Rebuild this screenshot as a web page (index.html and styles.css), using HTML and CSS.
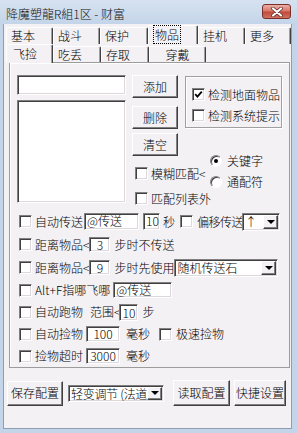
FILE: index.html
```html
<!DOCTYPE html>
<html lang="zh-CN">
<head>
    <meta charset="UTF-8">
    <title>降魔塑龍R組1区 - 财富</title>
    <link rel="stylesheet" href="styles.css">
</head>
<body>
    <div class="window">
        <div class="titlebar">
            <span class="title">降魔塑龍R組1区 - 财富</span>
            <div class="close">
                <svg width="14" height="10" viewBox="0 0 14 10">
                    <path d="M3 1.5L11 8.5M11 1.5L3 8.5" stroke="#5a2a25" stroke-width="3.6" stroke-linecap="round"/>
                    <path d="M3 1.5L11 8.5M11 1.5L3 8.5" stroke="#fff" stroke-width="2.2" stroke-linecap="round"/>
                </svg>
            </div>
        </div>
        <div class="client">
            <div class="tabs outer-tabs">
                <div class="tab">基本</div>
                <div class="tab">战斗</div>
                <div class="tab w48">保护</div>
                <div class="tab w50 active"><span class="focus">物品</span></div>
                <div class="tab">挂机</div>
                <div class="tab w46">更多</div>
            </div>
            <div class="tabs inner-tabs">
                <div class="tab active">飞捡</div>
                <div class="tab w48">吃丢</div>
                <div class="tab w48">存取</div>
                <div class="tab w57 center">穿戴</div>
            </div>
            <div class="page">
                <div class="top">
                    <div class="list-col">
                        <div class="field name-field"></div>
                        <div class="field listbox"></div>
                    </div>
                    <div class="btn-col">
                        <div class="btn">添加</div>
                        <div class="btn del">删除</div>
                        <div class="btn clr">清空</div>
                        <div class="check fuzzy"><span class="box"></span><span>模糊匹配&lt;</span></div>
                        <div class="check outside"><span class="box"></span><span>匹配列表外</span></div>
                    </div>
                    <div class="opt-col">
                        <div class="group">
                            <div class="check">
                                <span class="box">
                                    <svg width="9" height="9" viewBox="0 0 9 9"><polyline points="1.2,4.2 3.4,6.6 7.8,1.6" fill="none" stroke="#000" stroke-width="1.8"/></svg>
                                </span>
                                <span>检测地面物品</span>
                            </div>
                            <div class="check second"><span class="box"></span><span>检测系统提示</span></div>
                        </div>
                        <div class="radio first"><span class="dot on"></span><span>关键字</span></div>
                        <div class="radio"><span class="dot"></span><span>通配符</span></div>
                    </div>
                </div>

                <div class="row h23">
                    <div class="check"><span class="box"></span><span>自动传送</span></div>
                    <div class="field text-field" style="width:55px;margin-left:1px">@传送</div>
                    <div class="field text-field" style="width:17px;margin-left:4px">10</div>
                    <span class="ml3">秒</span>
                    <div class="check gap4 ml5"><span class="box"></span><span class="tight">偏移传送</span></div>
                    <div class="select small-select">
                        <span class="select-text">↑</span>
                        <span class="arrow"><i></i></span>
                    </div>
                </div>
                <div class="row h23">
                    <div class="check"><span class="box"></span><span>距离物品&lt;</span></div>
                    <div class="field num-field step-field">3</div>
                    <span class="ml4">步时不传送</span>
                </div>
                <div class="row h23">
                    <div class="check"><span class="box"></span><span>距离物品&lt;</span></div>
                    <div class="field num-field step-field">9</div>
                    <span class="ml4">步时先使用</span>
                    <div class="select stone-select">
                        <span class="select-text">随机传送石</span>
                        <span class="arrow"><i></i></span>
                    </div>
                </div>
                <div class="row">
                    <div class="check"><span class="box"></span><span>Alt+F指哪飞哪</span></div>
                    <div class="field text-field" style="width:59px;height:16px;margin-left:3px">@传送</div>
                </div>
                <div class="row">
                    <div class="check"><span class="box"></span><span>自动跑物</span></div>
                    <span class="ml7">范围&lt;</span>
                    <div class="field num-field range-field">10</div>
                    <span class="ml4">步</span>
                </div>
                <div class="row">
                    <div class="check"><span class="box"></span><span>自动捡物</span></div>
                    <div class="field num-field ms-field">100</div>
                    <span class="ml6">毫秒</span>
                    <div class="check gap4 ml9"><span class="box"></span><span>极速捡物</span></div>
                </div>
                <div class="row">
                    <div class="check"><span class="box"></span><span>捡物超时</span></div>
                    <div class="field num-field ms-field">3000</div>
                    <span class="ml6">毫秒</span>
                </div>
            </div>

            <div class="footer">
                <div class="btn save">保存配置</div>
                <div class="select mode-select">
                    <span class="select-text">轻变调节 (法道</span>
                    <span class="arrow"><i></i></span>
                </div>
                <div class="btn load">读取配置</div>
                <div class="btn hotkey">快捷设置</div>
            </div>
        </div>
    </div>
</body>
</html>
```

FILE: styles.css
```css
* {
    box-sizing: border-box;
}
body {
    margin: 0;
    font-family: "Noto Sans CJK SC", "Noto Sans", sans-serif;
    font-size: 12px;
    font-weight: 300;
    line-height: 14px;
    color: #000;
    background: #fff;
}
.window {
    width: 297px;
    height: 433px;
    display: flex;
    flex-direction: column;
    background: #c4d5e9;
}
.titlebar {
    height: 24px;
    display: flex;
    align-items: flex-start;
    background: linear-gradient(#d6e2f0, #c4d5e9);
}
.title {
    margin: 7px 0 0 6px;
    color: #111;
}
.close {
    margin: 4px 6px 0 auto;
    width: 29px;
    height: 15px;
    border: 1px solid #7a2f28;
    border-radius: 3px;
    background: linear-gradient(#eab0a6, #d7786a 45%, #c24b3c 55%, #d0715f);
    display: flex;
    align-items: center;
    justify-content: center;
}

.client {
    flex: 1;
    margin: 0 5px 4px 3px;
    background: #f4f1f4;
    border: 1px solid #8d9fb5;
    border-top: none;
}

/* tabs */
.tabs {
    display: flex;
    padding-left: 2px;
}
.outer-tabs {
    height: 20px;
    align-items: flex-end;
}
.inner-tabs {
    height: 18px;
    align-items: flex-end;
    position: relative;
    z-index: 1;
}
.tab {
    width: 47px;
    height: 17px;
    padding-left: 4px;
    line-height: 15px;
    border: 1px solid;
    border-color: #fff #404040 transparent #fff;
    border-bottom: none;
    border-radius: 2px 2px 0 0;
    box-shadow: inset -1px 0 #a0a0a0;
    white-space: nowrap;
}
.outer-tabs .tab.active {
    height: 19px;
    padding-left: 5px;
    padding-top: 1px;
}
.inner-tabs .tab {
    height: 16px;
}
.inner-tabs .tab.active {
    height: 19px;
    margin-bottom: -1px;
    padding-left: 6px;
    padding-top: 1px;
    background: #f4f1f4;
}
.tab.w46 { width: 46px; }
.tab.w48 { width: 48px; }
.tab.w50 { width: 50px; }
.tab.w57 { width: 57px; }
.tab.center {
    padding-left: 0;
    text-align: center;
}
.focus {
    outline: 1px dotted #000;
    outline-offset: 0;
    padding: 0 1px;
}

/* inner page */
.page {
    margin-left: 5px;
    width: 281px;
    height: 306px;
    border: 1px solid #9c9c9c;
    box-shadow: inset 1px 1px #fff;
}
.top {
    display: flex;
    height: 147px;
}
.list-col {
    margin-left: 7px;
    padding-top: 12px;
    width: 109px;
}
.name-field {
    height: 20px;
}
.listbox {
    margin-top: 5px;
    height: 103px;
}
.btn-col {
    margin-left: 6px;
    padding-top: 12px;
    width: 53px;
}
.btn-col .btn {
    width: 46px;
    height: 23px;
}
.btn-col .del { margin-top: 8px; }
.btn-col .clr { margin-top: 4px; }
.fuzzy {
    margin: 11px 0 0 3px;
}
.outside {
    margin: 12px 0 0 3px;
}
.opt-col {
    width: 97px;
    padding-top: 13px;
}
.group {
    height: 52px;
    padding: 11px 0 0 6px;
    border: 1px solid #a0a0a0;
    box-shadow: inset 1px 1px #fff, 1px 1px #fff;
}
.group .second {
    margin-top: 8px;
}
.radio {
    display: flex;
    align-items: center;
    gap: 5px;
    height: 12px;
    margin: 9px 0 0 25px;
    white-space: nowrap;
}
.radio.first {
    margin-top: 27px;
}
.dot {
    width: 12px;
    height: 12px;
    border-radius: 50%;
    border: 1px solid;
    border-color: #808080 #fff #fff #808080;
    box-shadow: inset 1px 1px #404040;
    background: #fff;
    display: flex;
    align-items: center;
    justify-content: center;
    flex: none;
}
.dot.on::after {
    content: "";
    width: 4px;
    height: 4px;
    border-radius: 50%;
    background: #000;
}

/* checkbox */
.check {
    display: flex;
    align-items: center;
    gap: 3px;
    height: 13px;
    white-space: nowrap;
    flex: none;
}
.check.gap4 { gap: 4px; }
.tight { letter-spacing: -0.5px; }
.box {
    width: 13px;
    height: 13px;
    flex: none;
    border: 1px solid;
    border-color: #808080 #fff #fff #808080;
    box-shadow: inset 1px 1px #404040, inset -1px -1px #dcd8dc;
    background: #fff;
    display: flex;
    align-items: center;
    justify-content: center;
}

/* rows */
.row {
    display: flex;
    align-items: center;
    height: 22px;
    padding-left: 9px;
    white-space: nowrap;
}
.row > * { flex: none; }
.row.h23 { height: 23px; }
.ml3 { margin-left: 3px; }
.ml4 { margin-left: 4px; }
.ml5 { margin-left: 5px; }
.ml6 { margin-left: 6px; }
.ml7 { margin-left: 7px; }
.ml9 { margin-left: 9px; }

/* sunken fields */
.field {
    background: #fff;
    border: 1px solid;
    border-color: #808080 #fff #fff #808080;
    box-shadow: inset 1px 1px #404040, inset -1px -1px #dcd8dc;
}
.text-field {
    height: 17px;
    padding-left: 2px;
    line-height: 14px;
}
.num-field {
    text-align: center;
    line-height: 13px;
}
.step-field {
    width: 21px;
    height: 15px;
    margin-left: 0;
}
.range-field {
    width: 19px;
    height: 17px;
    line-height: 15px;
    margin-left: -1px;
}
.ms-field {
    width: 34px;
    height: 16px;
    margin-left: 3px;
    line-height: 14px;
}

/* combo boxes */
.select {
    display: flex;
    align-items: center;
    height: 18px;
    padding: 0 1px 0 2px;
    background: #fff;
    border: 1px solid;
    border-color: #808080 #fff #fff #808080;
    box-shadow: inset 1px 1px #404040, inset -1px -1px #dcd8dc;
}
.select-text {
    flex: 1;
    line-height: 16px;
    white-space: nowrap;
}
.arrow {
    width: 15px;
    height: 14px;
    flex: none;
    background: #f4f1f4;
    border: 1px solid;
    border-color: #fff #404040 #404040 #fff;
    box-shadow: inset -1px -1px #808080;
    display: flex;
    align-items: center;
    justify-content: center;
}
.arrow i {
    width: 0;
    height: 0;
    border-left: 4px solid transparent;
    border-right: 4px solid transparent;
    border-top: 4px solid #000;
}
.small-select {
    width: 38px;
    margin-left: -1px;
}
.stone-select {
    width: 104px;
}
.mode-select {
    width: 96px;
    height: 17px;
    margin-left: 5px;
}
.mode-select .select-text {
    line-height: 15px;
    letter-spacing: -0.3px;
}
.mode-select .arrow {
    height: 13px;
}

/* raised buttons */
.btn {
    display: flex;
    align-items: center;
    justify-content: center;
    background: #f4f1f4;
    border: 1px solid;
    border-color: #fff #404040 #404040 #fff;
    box-shadow: inset -1px -1px #808080;
    white-space: nowrap;
}
.footer {
    display: flex;
    align-items: center;
    height: 28px;
    margin-top: 11px;
    padding-left: 3px;
}
.save {
    width: 56px;
    height: 25px;
}
.load {
    width: 57px;
    height: 26px;
    margin-left: 9px;
}
.hotkey {
    width: 52px;
    height: 26px;
    margin-left: 4px;
}
```
